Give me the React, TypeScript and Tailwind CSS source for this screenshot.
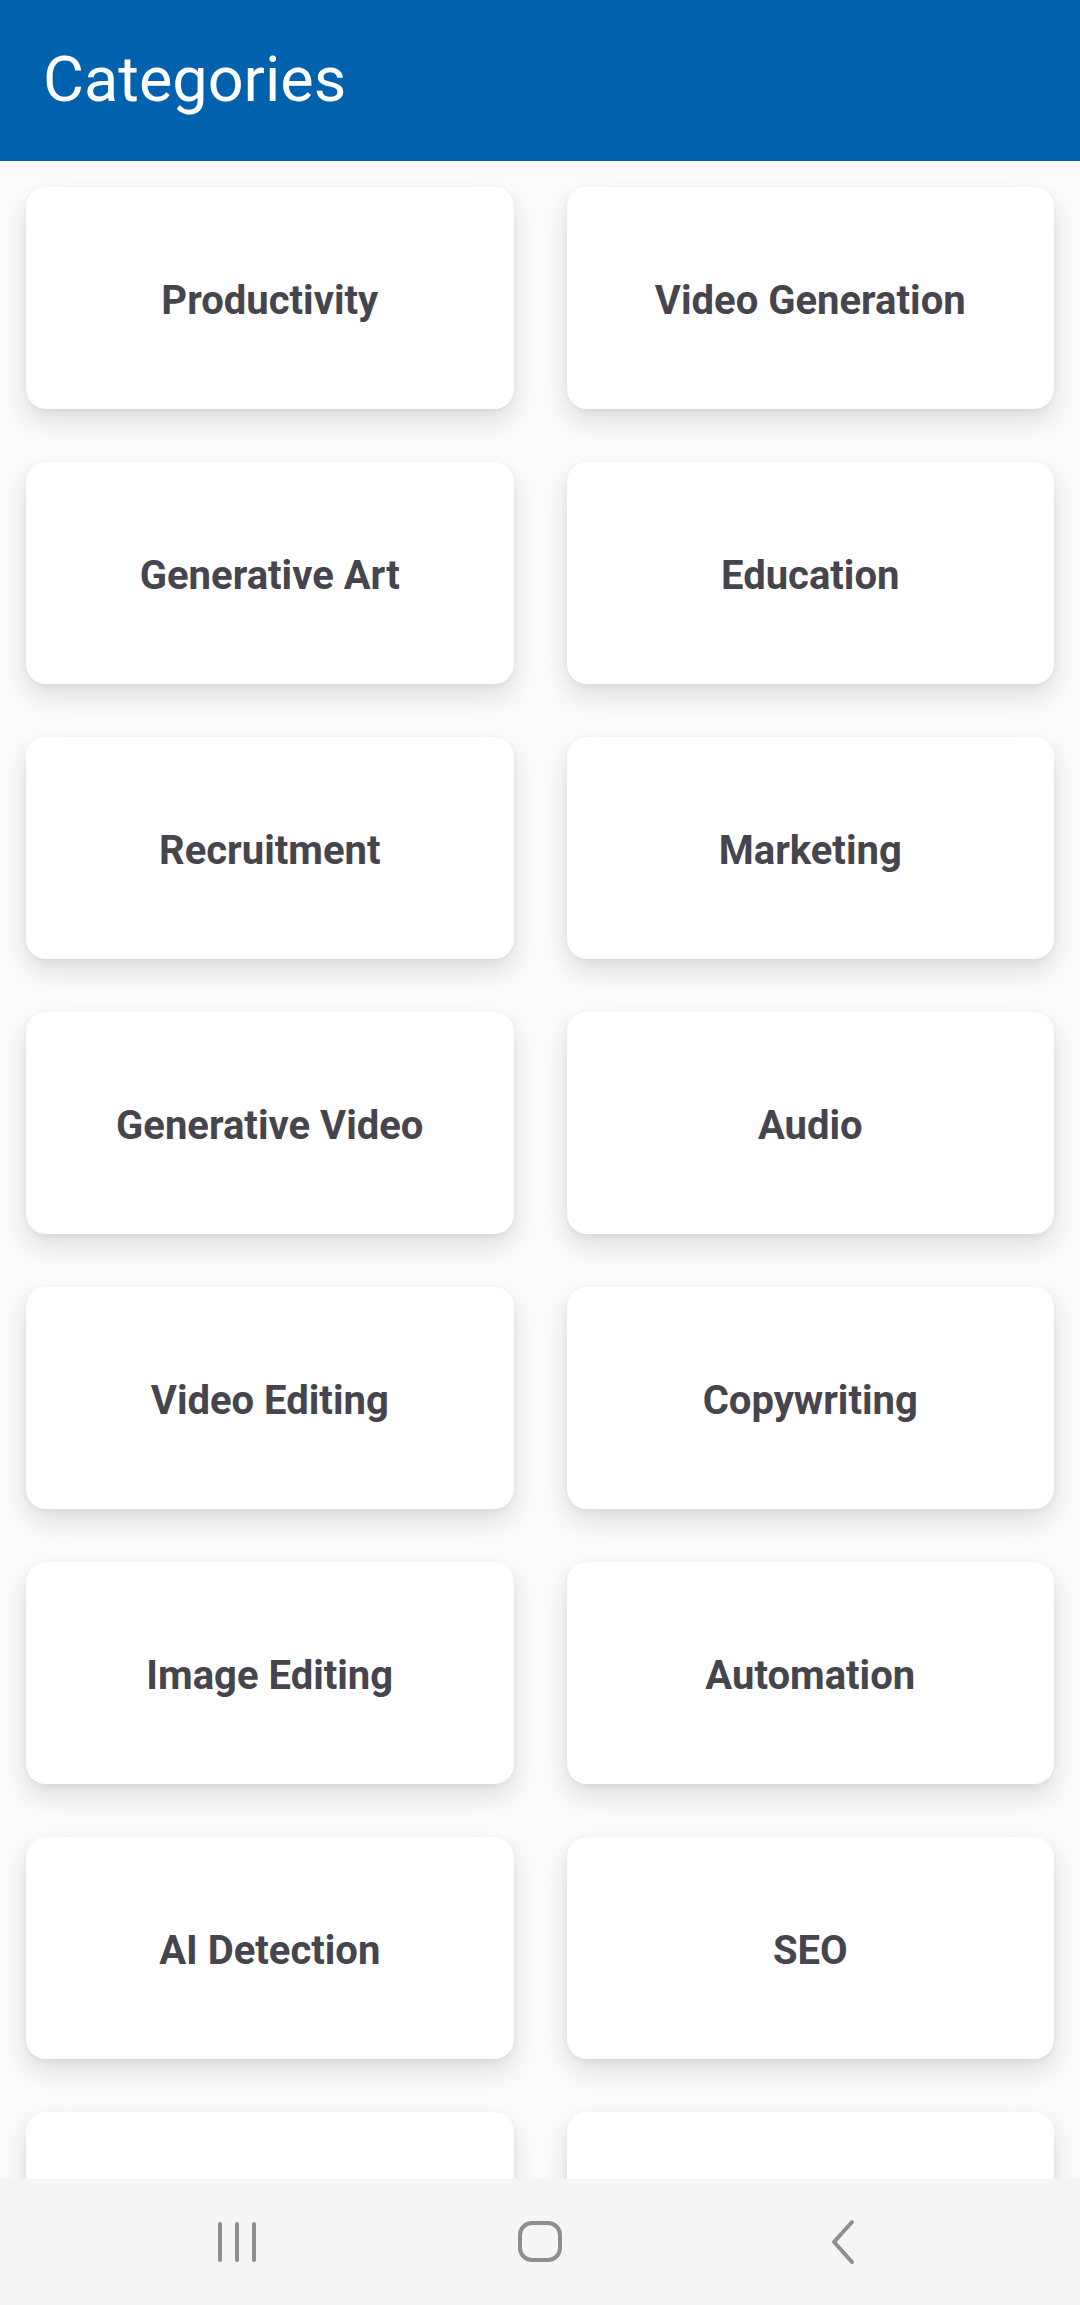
import React from "react";

const categories = [
  "Productivity",
  "Video Generation",
  "Generative Art",
  "Education",
  "Recruitment",
  "Marketing",
  "Generative Video",
  "Audio",
  "Video Editing",
  "Copywriting",
  "Image Editing",
  "Automation",
  "AI Detection",
  "SEO",
  "",
  "",
];

const CategoryCard = ({ name }: { name: string }) => (
  <div className="h-[222px] bg-white rounded-[20px] shadow-[0_12px_26px_rgba(0,0,0,0.12),0_2px_6px_rgba(0,0,0,0.05)] flex items-center justify-center">
    <p className="text-[40px] font-bold text-[#46454d] mt-[6px]">{name}</p>
  </div>
);

const NavBar = () => (
  <div className="h-[126px] shrink-0 bg-[#f5f5f5] flex items-center justify-center gap-[243px]">
    {/* recents */}
    <div className="w-[60px] flex justify-center">
      <svg width="42" height="44" viewBox="0 0 42 44">
        <g stroke="#8e8e8e" strokeWidth="4" strokeLinecap="round">
          <line x1="4" y1="4" x2="4" y2="40" />
          <line x1="21" y1="4" x2="21" y2="40" />
          <line x1="38" y1="4" x2="38" y2="40" />
        </g>
      </svg>
    </div>
    {/* home */}
    <div className="w-[60px] flex justify-center">
      <svg width="46" height="44" viewBox="0 0 46 44">
        <rect x="3" y="3" width="40" height="37" rx="12" fill="none" stroke="#8e8e8e" strokeWidth="4" />
      </svg>
    </div>
    {/* back */}
    <div className="w-[60px] flex justify-center">
      <svg width="30" height="46" viewBox="0 0 30 46">
        <polyline points="24,3 6,23 24,43" fill="none" stroke="#8e8e8e" strokeWidth="4" strokeLinecap="round" strokeLinejoin="round" />
      </svg>
    </div>
  </div>
);

const App = () => {
  return (
    <div className="h-[2305px] w-[1080px] flex flex-col bg-[#fdfafd] font-['Roboto',sans-serif] overflow-hidden">
      <div className="h-[161px] shrink-0 bg-[#0062ad] flex items-center pl-[43px]">
        <h1 className="text-[63px] text-white font-normal leading-none -mt-[2px]">Categories</h1>
      </div>
      <div className="flex-1 overflow-hidden px-[26px] pt-[26px]">
        <div className="grid grid-cols-2 gap-x-[53px] gap-y-[53px]">
          {categories.map((c, i) => (
            <CategoryCard key={i} name={c} />
          ))}
        </div>
      </div>
      <NavBar />
    </div>
  );
};

export default App;
